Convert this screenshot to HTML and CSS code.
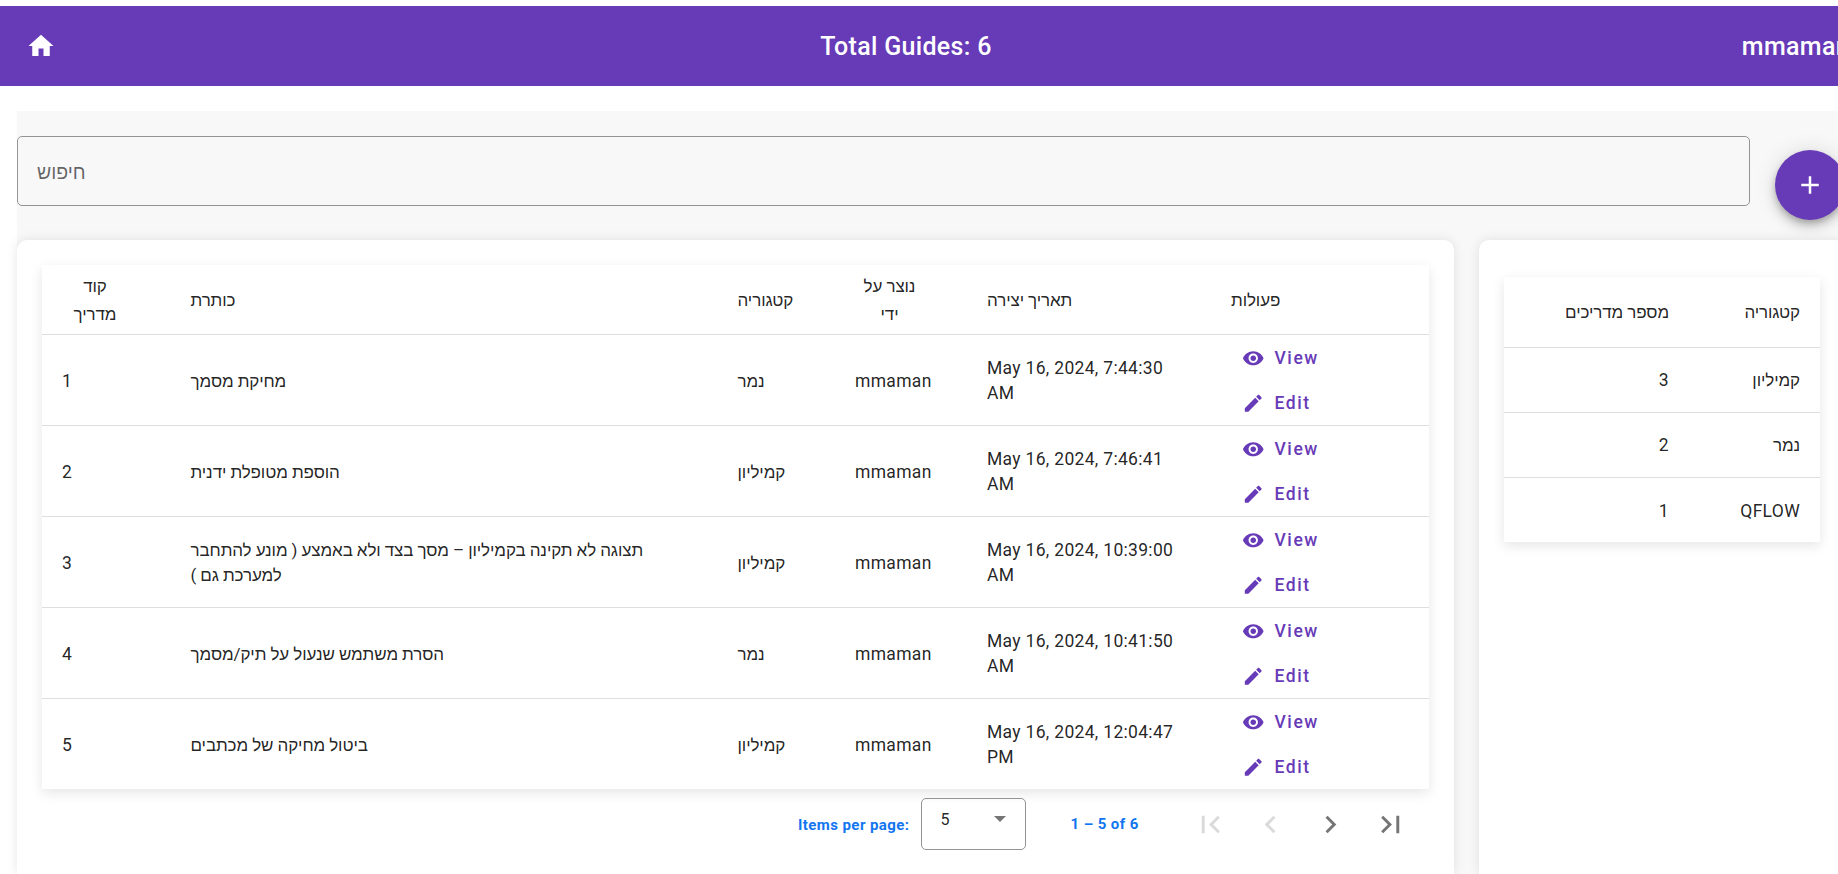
FILE: index.html
```html
<!DOCTYPE html>
<html lang="en">
<head>
<meta charset="utf-8">
<title>Guides</title>
<link rel="stylesheet" href="styles.css">
</head>
<body>
<svg class="defs" width="0" height="0">
  <symbol id="eye" viewBox="0 0 24 24"><path d="M12 4.5C7 4.5 2.73 7.61 1 12c1.73 4.39 6 7.5 11 7.5s9.27-3.11 11-7.5c-1.73-4.39-6-7.5-11-7.5zM12 17c-2.76 0-5-2.24-5-5s2.24-5 5-5 5 2.24 5 5-2.24 5-5 5zm0-8c-1.66 0-3 1.34-3 3s1.34 3 3 3 3-1.34 3-3-1.34-3-3-3z"/></symbol>
  <symbol id="pencil" viewBox="0 0 24 24"><path d="M3 17.25V21h3.75L17.81 9.94l-3.75-3.75L3 17.25zM20.71 7.04c.39-.39.39-1.02 0-1.41l-2.34-2.34c-.39-.39-1.02-.39-1.41 0l-1.83 1.83 3.75 3.75 1.83-1.83z"/></symbol>
</svg>
<header class="toolbar">
  <svg class="home" viewBox="0 0 24 24"><path d="M10 20v-6h4v6h5v-8h3L12 3 2 12h3v8z"/></svg>
  <span class="total">Total Guides: 6</span>
  <span class="user">mmaman</span>
</header>
<main class="content">
  <div class="search-row">
    <div class="search"><span>חיפוש</span></div>
    <button class="fab"><svg viewBox="0 0 24 24"><path d="M19 13h-6v6h-2v-6H5v-2h6V5h2v6h6v2z"/></svg></button>
  </div>
  <div class="cards">
    <section class="card card-main">
      <div class="table">
        <div class="row head">
          <div class="cell he"><span class="wrap-code">קוד מדריך</span></div><div class="cell he">כותרת</div><div class="cell he">קטגוריה</div><div class="cell he"><span class="wrap-by">נוצר על ידי</span></div><div class="cell he">תאריך יצירה</div><div class="cell he">פעולות</div>
        </div>
        <div class="row">
          <div class="cell">1</div><div class="cell he">מחיקת מסמך</div><div class="cell he">נמר</div><div class="cell">mmaman</div><div class="cell">May 16, 2024, 7:44:30 AM</div>
          <div class="cell actions"><button class="action"><svg><use href="#eye"/></svg>View</button><button class="action"><svg><use href="#pencil"/></svg>Edit</button></div>
        </div>
        <div class="row">
          <div class="cell">2</div><div class="cell he">הוספת מטופלת ידנית</div><div class="cell he">קמיליון</div><div class="cell">mmaman</div><div class="cell">May 16, 2024, 7:46:41 AM</div>
          <div class="cell actions"><button class="action"><svg><use href="#eye"/></svg>View</button><button class="action"><svg><use href="#pencil"/></svg>Edit</button></div>
        </div>
        <div class="row">
          <div class="cell">3</div><div class="cell he">תצוגה לא תקינה בקמיליון – מסך בצד ולא באמצע ( מונע להתחבר למערכת גם )</div><div class="cell he">קמיליון</div><div class="cell">mmaman</div><div class="cell">May 16, 2024, 10:39:00 AM</div>
          <div class="cell actions"><button class="action"><svg><use href="#eye"/></svg>View</button><button class="action"><svg><use href="#pencil"/></svg>Edit</button></div>
        </div>
        <div class="row">
          <div class="cell">4</div><div class="cell he">הסרת משתמש שנעול על תיק/מסמך</div><div class="cell he">נמר</div><div class="cell">mmaman</div><div class="cell">May 16, 2024, 10:41:50 AM</div>
          <div class="cell actions"><button class="action"><svg><use href="#eye"/></svg>View</button><button class="action"><svg><use href="#pencil"/></svg>Edit</button></div>
        </div>
        <div class="row">
          <div class="cell">5</div><div class="cell he">ביטול מחיקה של מכתבים</div><div class="cell he">קמיליון</div><div class="cell">mmaman</div><div class="cell">May 16, 2024, 12:04:47 PM</div>
          <div class="cell actions"><button class="action"><svg><use href="#eye"/></svg>View</button><button class="action"><svg><use href="#pencil"/></svg>Edit</button></div>
        </div>
      </div>
      <div class="paginator">
        <span class="per-page">Items per page:</span>
        <div class="select"><span>5</span><i class="arrow"></i></div>
        <span class="range">1 – 5 of 6</span>
        <svg class="nav off" viewBox="0 0 24 24"><path d="M18.41 16.59L13.82 12l4.59-4.59L17 6l-6 6 6 6zM6 6h2v12H6z"/></svg>
        <svg class="nav off" viewBox="0 0 24 24"><path d="M15.41 7.41L14 6l-6 6 6 6 1.41-1.41L10.83 12z"/></svg>
        <svg class="nav" viewBox="0 0 24 24"><path d="M10 6L8.59 7.41 13.17 12l-4.58 4.59L10 18l6-6z"/></svg>
        <svg class="nav" viewBox="0 0 24 24"><path d="M5.59 7.41L10.18 12l-4.59 4.59L7 18l6-6-6-6zM16 6h2v12h-2z"/></svg>
      </div>
    </section>
    <section class="card card-side">
      <div class="table summary" dir="rtl">
        <div class="srow shead"><div class="he">קטגוריה</div><div class="he">מספר מדריכים</div></div>
        <div class="srow"><div class="he">קמיליון</div><div>3</div></div>
        <div class="srow"><div class="he">נמר</div><div>2</div></div>
        <div class="srow"><div>QFLOW</div><div>1</div></div>
      </div>
    </section>
  </div>
</main>
</body>
</html>
```
FILE: styles.css
```css
* { box-sizing: border-box; }
html, body { height: 100%; }
body {
  margin: 0;
  padding-top: 6px;
  overflow: hidden;
  background: #fff;
  color: rgba(0, 0, 0, .87);
  font: 400 17.5px/25px Roboto, "Liberation Sans", sans-serif;
}
button { border: 0; background: none; padding: 0; font: inherit; }
.defs { display: block; position: absolute; }
.toolbar {
  width: 1880px;
  height: 80px;
  padding: 0 30px 0 26px;
  display: flex;
  align-items: center;
  justify-content: space-between;
  background: #673ab7;
  color: #fff;
  font-size: 25px;
  font-weight: 500;
  letter-spacing: .32px;
}
.total { margin-left: 14px; }
.home { width: 30px; height: 30px; fill: #fff; }
.content {
  width: 1828px;
  height: 763px;
  margin: 25px 0 0 17px;
  padding-top: 25px;
  background: #f8f8f8;
}
.search-row { display: flex; gap: 25px; height: 104px; }
.search {
  width: 1733px;
  height: 70px;
  padding: 3px 19px 0;
  display: flex;
  align-items: center;
  border: 1px solid #949494;
  border-radius: 5px;
  color: rgba(0, 0, 0, .6);
  font-size: 19.5px;
}
.fab {
  flex: none;
  width: 70px;
  height: 70px;
  margin-top: 14px;
  border-radius: 50%;
  display: grid;
  place-items: center;
  background: #673ab7;
  box-shadow: 0 4px 6px -1px rgba(0, 0, 0, .2), 0 7px 12px rgba(0, 0, 0, .14), 0 1px 22px rgba(0, 0, 0, .12);
}
.fab svg { width: 30px; height: 30px; fill: #fff; }
.cards { display: flex; gap: 25px; height: 634px; }
.card { background: #fff; border-radius: 10px 10px 0 0; box-shadow: 0 0 12px rgba(0, 0, 0, .1); padding: 25px; }
.card-main { width: 1437px; }
.card-side { width: 366px; padding-top: 37px; }
.table { background: #fff; box-shadow: 0 4px 12px rgba(0, 0, 0, .1); }
.row {
  display: grid;
  grid-template-columns: 128.5px 547px 117.5px 132px 244px 218px;
  align-items: center;
  height: 91px;
  padding-top: 1px;
  border-bottom: 1px solid #dedede;
}
.row.head { height: 70px; padding-top: 0; line-height: 28px; }
.row:last-child { border-bottom: 0; height: 90px; }
.cell { padding: 0 20px; letter-spacing: .0178em; }
.he { font-size: 17px; letter-spacing: -.1px; }
.wrap-code, .wrap-by { display: block; width: 66px; text-align: center; }
.wrap-by { width: 69px; }
.actions { display: flex; flex-direction: column; align-items: flex-start; padding-left: 31px; }
.action {
  height: 45px;
  display: flex;
  align-items: center;
  gap: 10px;
  color: #673ab7;
  font-weight: 500;
  letter-spacing: 1.56px;
}
.action svg { width: 22.5px; height: 22.5px; fill: #673ab7; }
.paginator { height: 70px; display: flex; align-items: center; color: #1276f0; font-size: 15px; font-weight: 700; letter-spacing: .42px; padding-left: 756px; }
.per-page { flex: none; width: 122.5px; padding-top: 2px; }
.select {
  flex: none;
  width: 105px;
  height: 52px;
  padding: 0 19px 10px;
  display: flex;
  align-items: center;
  justify-content: space-between;
  border: 1px solid #949494;
  border-radius: 5px;
  color: rgba(0, 0, 0, .87);
  font-size: 16px;
  font-weight: 400;
}
.arrow { border: 6.25px solid transparent; border-top-color: #757575; border-bottom: 0; }
.range { flex: none; width: 122px; margin-left: 45px; }
.nav { width: 35px; height: 35px; margin-right: 25px; fill: #757575; flex: none; }
.nav.off { fill: #dadada; }
.summary { width: 316px; }
.srow {
  display: grid;
  grid-template-columns: 131px 1fr;
  align-items: center;
  height: 65px;
  padding: 1px 20px 0 0;
  border-bottom: 1px solid #dedede;
  letter-spacing: .0178em;
}
.srow.shead { height: 71px; padding-top: 0; }
.srow:last-child { border-bottom: 0; height: 64px; padding-top: 3px; }
```
